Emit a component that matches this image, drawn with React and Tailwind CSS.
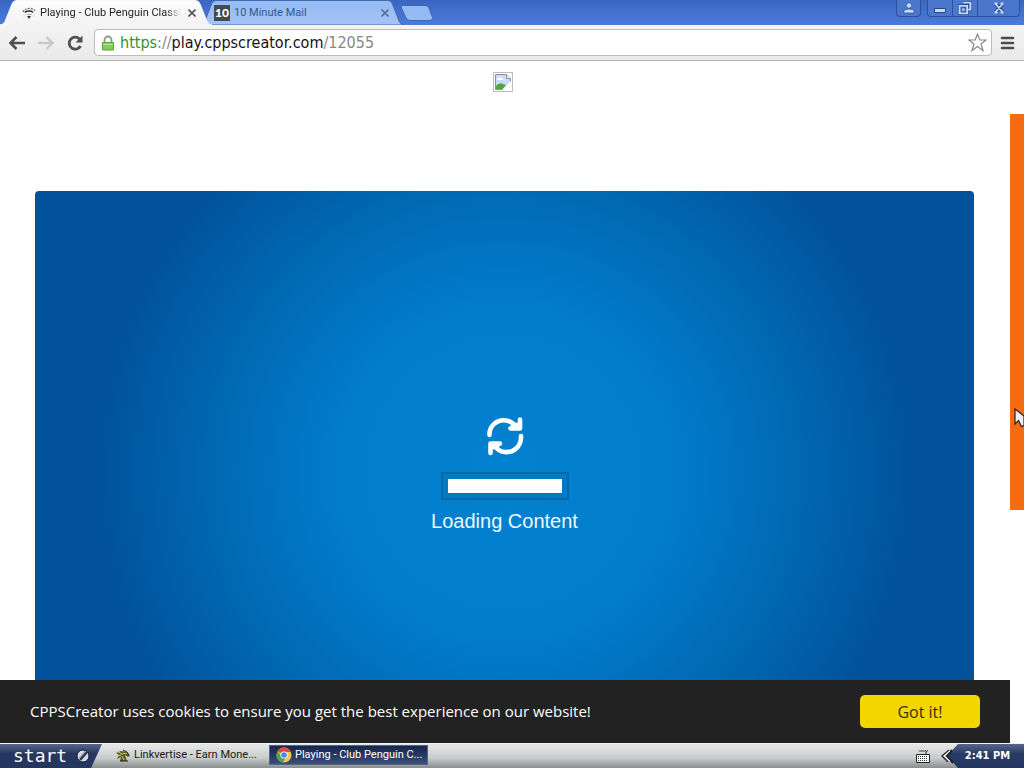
import React from "react";

function Favicon() {
  return (
    <svg className="h-4 w-4 shrink-0" viewBox="0 0 16 16" fill="none">
      <path d="M2 7C3 3 12 2 14 6" stroke="#777" strokeWidth="1.4" strokeDasharray="2 1" />
      <path d="M4 7.500C5 5.500 11 5.500 12 7.500" stroke="#222" strokeWidth="1.6" />
      <path d="M5.500 9.500h5" stroke="#aaa" strokeWidth="1" />
      <path d="M6 11h4L8 14z" fill="#333" />
      <path d="M3 9v3M13 9v3" stroke="#ddd" />
    </svg>
  );
}

function Cross({ color }) {
  return (
    <svg className="h-2 w-2" viewBox="0 0 8 8" stroke={color} strokeWidth="1.6">
      <path d="M.5 .5l7 7M7.5 .5l-7 7" />
    </svg>
  );
}

function TabShape({ top, bottom, edge }) {
  const id = "tab" + top.slice(1);
  return (
    <svg className="absolute inset-0 h-full w-full" viewBox="0 0 212 25" preserveAspectRatio="none">
      <defs>
        <linearGradient id={id} x1="0" y1="0" x2="0" y2="1">
          <stop offset="0" stopColor={top} />
          <stop offset="1" stopColor={bottom} />
        </linearGradient>
      </defs>
      <path
        d="M0 25C4 24 5 22 6 19L12 4Q13 .5 17 .5H195Q199 .5 200 4L206 19C207 22 208 24 212 25Z"
        fill={`url(#${id})`}
        stroke={edge}
        strokeWidth="1"
      />
    </svg>
  );
}

function TabStrip() {
  return (
    <header className="flex h-[25px] shrink-0 justify-between bg-linear-to-b from-[#3a66c0] to-[#4a7bdc] font-['Roboto',sans-serif]">
      <nav className="flex">
        <div className="relative z-10 flex h-[25px] w-[212px] items-center pt-px pr-3 pl-[21px]">
          <TabShape top="#fdfdfe" bottom="#f2f2f2" edge="#f7f8fb" />
          <a href="#playing" className="relative flex min-w-0 flex-1 items-center gap-[3px] text-[11px] text-[#222]">
            <Favicon />
            <span className="mask-r-from-90% mask-r-to-100% whitespace-nowrap">Playing - Club Penguin Classi</span>
          </a>
          <button aria-label="Close Playing" className="relative flex h-4 w-4 shrink-0 items-center justify-center">
            <Cross color="#555" />
          </button>
        </div>
        <div className="relative -ml-[12px] flex h-[25px] w-[204px] items-center pt-px pr-[11px] pl-[14px]">
          <TabShape top="#94bbf4" bottom="#a3c3f5" edge="#4468ad" />
          <a href="#mail" className="relative flex min-w-0 flex-1 items-center gap-1 text-[11px] text-[#33568f]">
            <span className="flex h-4 w-4 shrink-0 items-center justify-center bg-[#444b4f] font-['Lato'] text-[12px] font-black text-white">10</span>
            10 Minute Mail
          </a>
          <button aria-label="Close 10 Minute Mail" className="relative flex h-4 w-4 shrink-0 items-center justify-center">
            <Cross color="#587096" />
          </button>
        </div>
        <button aria-label="New tab" className="-ml-[4px] flex w-[34px] items-center">
          <svg className="h-4 w-[34px]" viewBox="0 0 34 16">
            <path d="M2 .5H25Q28 .5 29 3L32.500 12.500Q33 15.500 30 15.500H10Q7 15.500 6 13L1.500 3Q1 .5 2 .5Z" fill="#94b9f3" stroke="#4067b4" />
          </svg>
        </button>
      </nav>
      <div className="flex pr-[4px]">
        <button aria-label="User" className="mr-[6px] flex h-[17px] w-[25px] items-center justify-center rounded-b border border-t-0 border-[#2d519c] bg-[#4a77cb]">
          <svg className="h-3 w-3 shrink-0" viewBox="0 0 12 12" fill="#c4dafa" stroke="#284885" strokeWidth=".7">
            <circle cx="6" cy="3.500" r="2.700" />
            <path d="M.8 11V9Q1.500 7 6 7T11.200 9V11Z" />
          </svg>
        </button>
        <div className="flex h-[17px] rounded-b border border-t-0 border-[#2d519c] bg-[#4a77cb]">
          <button aria-label="Minimize" className="flex w-[25px] items-center justify-center border-r border-[#2d519c]">
            <svg className="h-3 w-3" viewBox="0 0 12 12"><path d="M.5 6.500h11v4H.5z" fill="#c4dafa" stroke="#284885" /></svg>
          </button>
          <button aria-label="Restore" className="flex w-[25px] items-center justify-center border-r border-[#2d519c]">
            <svg className="h-[14px] w-[14px] shrink-0" viewBox="0 0 13 13" fill="none">
              <path d="M5 1.500h6.500V8H9.500M1.500 4.500H8.500V11.500H1.500Z" stroke="#284885" strokeWidth="3" />
              <path d="M5 1.500h6.500V8H9.500M1.500 4.500H8.500V11.500H1.500Z" stroke="#c4dafa" strokeWidth="1.8" />
              <path d="M4 7h2v2H4z" fill="#c4dafa" />
            </svg>
          </button>
          <button aria-label="Close" className="flex w-[41px] items-center justify-center">
            <svg className="h-3 w-3" viewBox="0 0 12 12" fill="none">
              <path d="M2.500 2l7 8M9.500 2l-7 8" stroke="#284885" strokeWidth="3.500" />
              <path d="M1.500 1.500h3M7.500 1.500h3M2.500 2l7 8M9.500 2l-7 8M1.500 10.500h3M7.500 10.500h3" stroke="#c4dafa" strokeWidth="1.8" />
            </svg>
          </button>
        </div>
      </div>
    </header>
  );
}

function Toolbar() {
  return (
    <div className="flex h-[36px] shrink-0 items-center border-b border-[#b4b4b4] bg-linear-to-b from-[#f4f4f4] to-[#e9e9e9] pr-2 pl-2">
      <button aria-label="Back" className="w-[29px]">
        <svg className="h-[18px] w-[18px]" viewBox="0 0 18 18" fill="none" stroke="#4f4f4f" strokeWidth="2.600"><path d="M17 9H3M8.500 3L2.500 9l6 6" /></svg>
      </button>
      <button aria-label="Forward" className="w-[29px]">
        <svg className="h-[18px] w-[18px]" viewBox="0 0 18 18" fill="none" stroke="#c9c9c9" strokeWidth="2.400"><path d="M1 9H15M9.500 3l6 6-6 6" /></svg>
      </button>
      <button aria-label="Reload" className="w-[28px]">
        <svg className="h-[18px] w-[18px]" viewBox="0 0 18 18" fill="none"><path d="M14.500 12A6 6 0 1 1 13.500 5" stroke="#4f4f4f" strokeWidth="2.800" /><path d="M16.500 1.500v7h-7z" fill="#4f4f4f" /></svg>
      </button>
      <div className="flex h-[27px] flex-1 items-center rounded-sm border border-[#bbb] bg-white pr-1 pl-[6px]">
        <svg className="h-4 w-[14px] shrink-0" viewBox="0 0 14 16">
          <path d="M3.500 8V5a3.500 3.500 0 0 1 7 0v3" fill="none" stroke="#8b9b86" strokeWidth="1.800" />
          <path d="M1.500 7.500h11v7.500h-11z" fill="#84ce5a" stroke="#5ca43c" />
          <path d="M2.500 9.500h9" stroke="#b5e594" />
        </svg>
        <a href="#address" className="ml-[5px] flex-1 font-['DejaVu_Sans_Condensed','DejaVu_Sans',sans-serif] text-[16px] leading-6 text-[#888]">
          <span className="text-[#35902c]">https</span>://<span className="text-[#171017]">play.cppscreator.com</span>/12055
        </a>
        <button aria-label="Bookmark">
          <svg className="h-[19px] w-[19px]" viewBox="0 0 19 19" fill="white" stroke="#888" strokeWidth="1.200"><path d="M9.500 1l2.300 6H18l-5 4 2 6.500-5.500-4L4 17.500 6 11 1 7h6.200z" /></svg>
        </button>
      </div>
      <button aria-label="Menu" className="ml-[8px]">
        <svg className="h-4 w-4" viewBox="0 0 16 16" stroke="#4c4c4c" strokeWidth="2.600" strokeLinecap="round"><path d="M2 3h11M2 8h11M2 13h11" /></svg>
      </button>
    </div>
  );
}

function BrokenImage() {
  return (
    <svg role="img" aria-label="Unavailable image" className="h-5 w-5" viewBox="0 0 20 20">
      <path d="M.5 .5h19v19H.5z" fill="#fff" stroke="#bbb" />
      <path d="M2.500 2.500h11l4 4v11h-15z" fill="#cbdcf6" stroke="#8c9092" />
      <path d="M3 17v-3q3-4 7-2l3 1-3 4z" fill="#55a43e" />
      <path d="M4 7q2-3 4-1 3 0 2 2H4z" fill="#fff" />
      <path d="M13.500 2.500v4h4" fill="#fff" stroke="#8c9092" />
      <path d="M18 9L9 18h9z" fill="#fff" />
    </svg>
  );
}

function Page() {
  return (
    <main className="relative min-h-0 flex-1 overflow-hidden bg-white">
      <div className="flex h-full flex-col pr-[50px] pl-[35px]">
        <div className="flex h-[130px] shrink-0 items-start justify-center pt-[11px] pr-[3px]"><BrokenImage /></div>
        <section className="flex flex-1 flex-col items-center rounded-t bg-[radial-gradient(circle_410px_at_50%_51%,#0281cf_0%,#017dcc_40%,#0169b4_70%,#01529a_100%)] pt-[225px]">
          <svg className="h-10 w-[38px]" viewBox="0 0 38 40" fill="none" stroke="white" strokeWidth="4.600" strokeLinecap="round" strokeLinejoin="round">
            <path d="M3.500 19C3 9 12 3 20 4.500C25 5 28 8 30 11" />
            <path d="M34 3.500V12.500H24.500L30 9" />
            <path d="M35 20C35.500 31 27 37 18.500 36C13 35.500 10 32 8 29" />
            <path d="M4.500 37V27.500H14L8 31" />
          </svg>
          <div role="progressbar" aria-label="Loading Content" className="mt-4 h-[28px] w-[128px] border-2 border-[#066aa8] bg-[#0579c2] p-[5px]">
            <div className="h-[14px] w-[114px] bg-white" />
          </div>
          <p className="mt-[5px] font-['Liberation_Sans',sans-serif] text-[20px] leading-8 text-[#eef9ff]">Loading Content</p>
        </section>
      </div>
      <aside className="absolute top-[53px] right-0 h-[396px] w-[14px] bg-[#f46b12]" />
      <div className="absolute right-[14px] bottom-0 left-0 flex h-[63px] items-center justify-between bg-[#222] pr-[30px] pl-[30px]">
        <p className="text-[15px] text-white">CPPSCreator uses cookies to ensure you get the best experience on our website!</p>
        <button className="h-[33px] w-[120px] rounded-[5px] bg-[#f1d600] text-[16px] text-[#3b2b13]">Got it!</button>
      </div>
      <svg className="absolute top-[347px] right-0 h-5 w-[10px]" viewBox="0 0 10 20">
        <path d="M1 1v15l3.500-3.500 3 6 2.500-1V8z" fill="#eef0fa" stroke="#222" strokeWidth="1.200" />
      </svg>
    </main>
  );
}

function ChromeIcon() {
  return (
    <svg className="h-4 w-4 shrink-0" viewBox="0 0 16 16">
      <circle cx="8" cy="8" r="7.500" fill="#f3c84b" />
      <path d="M8 8L1.500 4.300A7.500 7.500 0 0 1 14.800 5H8z" fill="#db4e3f" />
      <path d="M1.500 4.300A7.500 7.500 0 0 0 7 15.500L10 10 6 10z" fill="#4ba45a" />
      <circle cx="8" cy="8" r="3.600" fill="#fff" />
      <circle cx="8" cy="8" r="2.800" fill="#4587e8" />
    </svg>
  );
}

function Taskbar() {
  return (
    <footer className="flex h-[25px] shrink-0 items-stretch border-t border-[#edf0f0] bg-linear-to-b from-[#e3e5e4] from-10% via-[#c7caca] via-60% to-[#888d8e] font-['Roboto',sans-serif]">
      <button className="relative flex w-[103px] shrink-0 items-center pl-[13px] text-white">
        <svg className="absolute inset-0 h-full w-full" viewBox="0 0 103 24" preserveAspectRatio="none">
          <defs><linearGradient id="startFill" x1="0" y1="0" x2="0" y2="1"><stop stopColor="#55688b" /><stop offset=".4" stopColor="#26375f" /><stop offset="1" stopColor="#223661" /></linearGradient></defs>
          <path d="M0 0H102L91 24H0z" fill="url(#startFill)" />
        </svg>
        <span className="relative w-[63px] text-left font-['DejaVu_Sans_Mono',monospace] text-[18px] leading-5">start</span>
        <svg className="relative h-[14px] w-[14px]" viewBox="0 0 14 14">
          <circle cx="7" cy="7" r="6" fill="#d5dae2" stroke="#121c35" />
          <path d="M11 3L4 11" stroke="#24345a" strokeWidth="2.500" />
          <path d="M9 2L3 9" stroke="#8b97ad" strokeWidth="1" />
        </svg>
      </button>
      <button className="mt-px flex h-[21px] w-[158px] items-center gap-[3px] pl-[12px] text-[11px] whitespace-nowrap text-[#1a1a1a]">
        <svg className="h-4 w-4 shrink-0" viewBox="0 0 16 16" fill="none">
          <path d="M1 5l5-2 6 1 3 4-2 1-3-2 2 6H5l1-4-4 2 2-4z" fill="#5b5b22" />
          <path d="M2 3l5 3 5-1M7 8l2 4M2 8l4-1" stroke="#d3cb78" />
          <path d="M8 2l4 2 2 3M5 13h8" stroke="#202512" />
        </svg>
        Linkvertise - Earn Mone...
      </button>
      <button className="mt-px ml-[8px] flex h-[20px] w-[159px] items-center gap-[3px] self-start border border-[#53658a] bg-linear-to-b from-[#17254b] to-[#3b4e78] pl-[6px] text-[11px] whitespace-nowrap text-white">
        <ChromeIcon />
        Playing - Club Penguin C...
      </button>
      <div className="ml-auto flex items-center">
        <button aria-label="Keyboard" className="mr-[9px]">
          <svg className="h-[15px] w-4" viewBox="0 0 16 15" fill="none">
            <path d="M4 1.500q1 2 2 0q1 2 2 0q1 2 2 0q1 2 3 0M11 3v2" stroke="#222" />
            <path d="M1.500 5.500h13v8h-13z" fill="#fff" stroke="#222" />
            <path d="M3 7.500h10M3 9.500h10M3 11.500h10" stroke="#333" strokeDasharray="1 1" />
          </svg>
        </button>
        <div className="relative flex h-full w-[84px] items-center justify-end pr-[14px]">
          <svg className="absolute inset-0 h-full w-full" viewBox="0 0 84 24" preserveAspectRatio="none">
            <defs><linearGradient id="trayFill" x1="0" y1="0" x2="0" y2="1"><stop stopColor="#55688b" /><stop offset=".4" stopColor="#2a3c65" /><stop offset="1" stopColor="#223661" /></linearGradient></defs>
            <path d="M18 0H84V24H18L7 12z" fill="url(#trayFill)" />
            <path d="M12 6L7 12l6 7" fill="none" stroke="#222" strokeWidth="2" />
            <path d="M9 6L2 12l6 6" fill="none" stroke="#333" strokeWidth="1.500" />
            <path d="M10 7L4 12l6 5" fill="none" stroke="#eee" />
          </svg>
          <time className="relative font-['DejaVu_Sans_Condensed','DejaVu_Sans',sans-serif] text-[11px] font-bold text-white">2:41 PM</time>
        </div>
      </div>
    </footer>
  );
}

export default function App() {
  return (
    <div className="flex h-screen flex-col overflow-hidden bg-white font-['Open_Sans','Noto_Sans',sans-serif]">
      <TabStrip />
      <Toolbar />
      <Page />
      <Taskbar />
    </div>
  );
}
